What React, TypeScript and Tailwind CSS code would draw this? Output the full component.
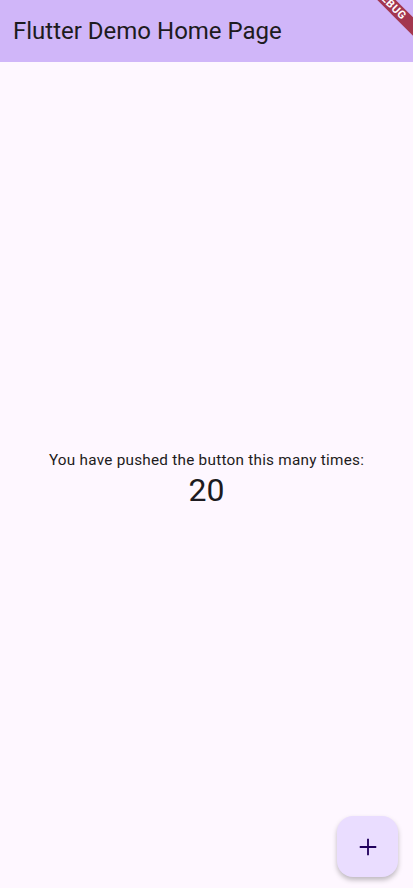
import { useState } from 'react';

export default function App(): JSX.Element {
  const [count, setCount] = useState(20);

  return (
    <div className="relative flex h-[888px] w-[413px] flex-col overflow-hidden bg-[#fef7ff] font-['Roboto',sans-serif] text-[#1d1b20]">
      <header className="flex h-[62px] shrink-0 items-center bg-[#d0b6f9] px-[13px]">
        <h1 className="text-[24px] font-normal leading-none">Flutter Demo Home Page</h1>
      </header>

      <main className="flex flex-1 flex-col items-center justify-center pt-[10px]">
        <p className="text-[15.3px] leading-[20px] tracking-[0.25px]">You have pushed the button this many times:</p>
        <p className="text-[32px] leading-[40px]">{count}</p>
      </main>

      <button
        onClick={() => setCount(count + 1)}
        className="absolute left-[337px] top-[816px] flex h-[61px] w-[61px] items-center justify-center rounded-[16px] bg-[#eaddff] text-[#21005d] shadow-[0_3px_5px_rgba(0,0,0,0.25)]"
        aria-label="Increment"
      >
        <svg width="22" height="22" viewBox="0 0 24 24" fill="none" stroke="currentColor" strokeWidth="2">
          <path d="M12 3v18M3 12h18" />
        </svg>
      </button>

      {/* debug banner */}
      <div className="pointer-events-none absolute left-[331px] top-[-2px] flex h-[13px] w-[120px] rotate-45 items-center justify-center bg-[#a3364f] text-[11px] font-bold leading-none tracking-[0.5px] text-white">
        DEBUG
      </div>
    </div>
  );
}
